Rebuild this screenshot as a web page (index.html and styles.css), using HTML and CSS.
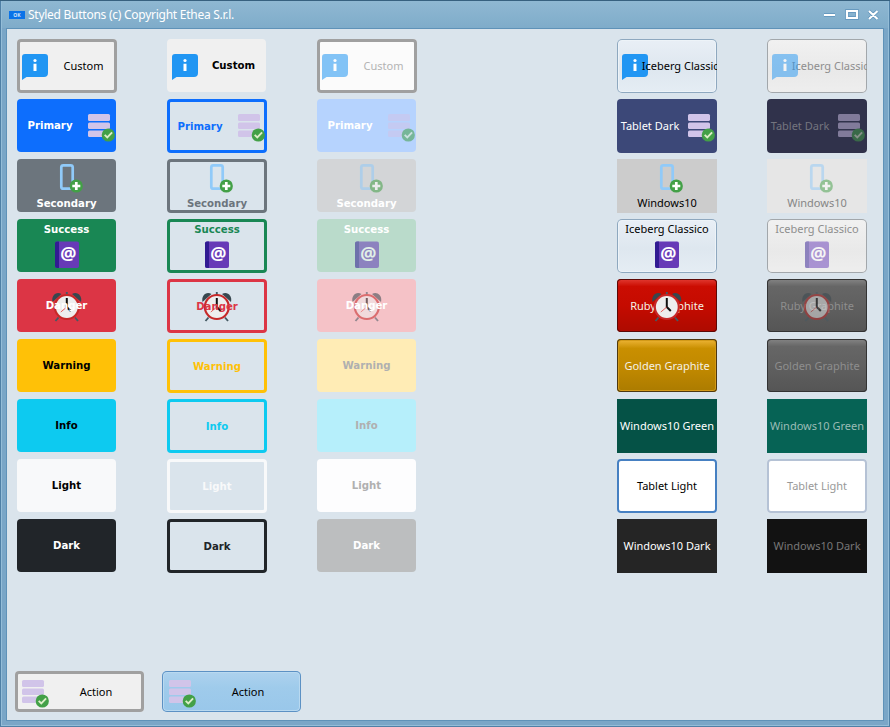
FILE: index.html
```
<!DOCTYPE html>
<html lang="en">
<head>
<meta charset="utf-8">
<title>Styled Buttons</title>
<link rel="stylesheet" href="styles.css">
</head>
<body>
<svg class="defs" aria-hidden="true">
  <symbol id="info" viewBox="0 0 32 32"><path fill="#2196f3" d="M6 4H26a3 3 0 0 1 3 3V23a4 4 0 0 1-4 4H7.500L3 30V7a3 3 0 0 1 3-3z"/><circle cx="16" cy="10.500" r="1.600" fill="#fff"/><path fill="#fff" d="M14.500 13.700h3V21h-3z"/></symbol>
  <symbol id="check" viewBox="0 0 32 32"><g fill="#d1c4e9"><rect x="3" y="4" width="22" height="7" rx="1.500"/><rect x="3" y="12.500" width="22" height="6.500" rx="1.500"/><rect x="3" y="20.500" width="22" height="6.500" rx="1.500"/></g><circle cx="23.300" cy="25" r="6.600" fill="#43a047"/><path d="M19.700 24.800l2.600 2.600 4.800-5" fill="none" stroke="#dcedc8" stroke-width="1.900"/></symbol>
  <symbol id="phone" viewBox="0 0 32 32"><rect x="10.300" y="4.300" width="11.400" height="23.400" rx="2" fill="none" stroke="#90caf9" stroke-width="2.700"/><circle cx="25.300" cy="25" r="6.600" fill="#43a047"/><path d="M25.300 21v8M21.300 25h8" stroke="#fff" stroke-width="2.700"/></symbol>
  <symbol id="book" viewBox="0 0 32 32"><rect x="4" y="2.500" width="24" height="26.500" rx="2" fill="#673ab7"/><path fill="#311b92" d="M6 2.500H8V29H6a2 2 0 0 1-2-2V4.500a2 2 0 0 1 2-2z"/><text class="at" x="17.300" y="21.300" text-anchor="middle">@</text></symbol>
  <symbol id="clock" viewBox="0 0 32 32"><g fill="#37474f"><path d="M1.500 12C0 6 5 1 10.500 4z"/><path d="M30 12C31.500 6 26.500 1 21 4z"/></g><path d="M15.800 2v3M7.500 27.500L4.500 31M24 27.500l3 3.500" stroke="#455a64" stroke-width="1.900"/><circle cx="15.800" cy="17" r="13" fill="#c62828"/><circle cx="15.800" cy="17" r="10.900" fill="#eee"/><path d="M15.800 8v9l4 4" fill="none" stroke="#111" stroke-width="2"/><path d="M15.800 17l-6 5" stroke="#e53935" stroke-width=".8"/></symbol>
</svg>
<div class="window">
  <header class="titlebar">
    <span class="app">OK</span>
    <span class="caption">Styled Buttons (c) Copyright Ethea S.r.l.</span>
    <svg class="controls" viewBox="0 0 56 14"><g fill="none" stroke="#5c91ba" stroke-width="3.600"><path d="M1 7h11M24 3h10v7H24zM46 3l8.500 8M54.500 3l-8.500 8"/></g><g fill="none" stroke="#fff" stroke-width="2.200"><path d="M1 7h11M24 3h10v7H24zM46 3l8.500 8M54.500 3l-8.500 8"/></g></svg>
  </header>
  <main class="client">
    <div class="board">
      <div class="column">
        <button class="btn left gray"><svg><use href="#info"/></svg><span>Custom</span></button>
        <button class="btn bold fill right primary"><svg><use href="#check"/></svg><span>Primary</span></button>
        <button class="btn bold fill top secondary"><svg><use href="#phone"/></svg><span>Secondary</span></button>
        <button class="btn bold fill bottom success"><svg><use href="#book"/></svg><span>Success</span></button>
        <button class="btn bold fill over danger"><svg><use href="#clock"/></svg><span>Danger</span></button>
        <button class="btn bold fill warning"><span>Warning</span></button>
        <button class="btn bold fill info"><span>Info</span></button>
        <button class="btn bold fill light"><span>Light</span></button>
        <button class="btn bold fill dark"><span>Dark</span></button>
      </div>
      <div class="column">
        <button class="btn bold fill left plain"><svg><use href="#info"/></svg><span>Custom</span></button>
        <button class="btn bold right line primary"><svg><use href="#check"/></svg><span>Primary</span></button>
        <button class="btn bold top line secondary"><svg><use href="#phone"/></svg><span>Secondary</span></button>
        <button class="btn bold bottom line success"><svg><use href="#book"/></svg><span>Success</span></button>
        <button class="btn bold over line danger"><svg><use href="#clock"/></svg><span>Danger</span></button>
        <button class="btn bold line warning"><span>Warning</span></button>
        <button class="btn bold line info"><span>Info</span></button>
        <button class="btn bold line light"><span>Light</span></button>
        <button class="btn bold line dark"><span>Dark</span></button>
      </div>
      <div class="column off">
        <button class="btn left gray"><svg><use href="#info"/></svg><span>Custom</span></button>
        <button class="btn bold fill right primary"><svg><use href="#check"/></svg><span>Primary</span></button>
        <button class="btn bold fill top secondary"><svg><use href="#phone"/></svg><span>Secondary</span></button>
        <button class="btn bold fill bottom success"><svg><use href="#book"/></svg><span>Success</span></button>
        <button class="btn bold fill over danger"><svg><use href="#clock"/></svg><span>Danger</span></button>
        <button class="btn bold fill warning"><span>Warning</span></button>
        <button class="btn bold fill info"><span>Info</span></button>
        <button class="btn bold fill light"><span>Light</span></button>
        <button class="btn bold fill dark"><span>Dark</span></button>
      </div>
      <div class="column styled">
        <button class="btn left iceberg"><svg><use href="#info"/></svg><span>Iceberg Classico</span></button>
        <button class="btn right tablet-dark"><svg><use href="#check"/></svg><span>Tablet Dark</span></button>
        <button class="btn top win10"><svg><use href="#phone"/></svg><span>Windows10</span></button>
        <button class="btn bottom iceberg"><svg><use href="#book"/></svg><span>Iceberg Classico</span></button>
        <button class="btn over graphite ruby"><svg><use href="#clock"/></svg><span>Ruby Graphite</span></button>
        <button class="btn graphite gold"><span>Golden Graphite</span></button>
        <button class="btn win-green"><span>Windows10 Green</span></button>
        <button class="btn tablet-light"><span>Tablet Light</span></button>
        <button class="btn win-dark"><span>Windows10 Dark</span></button>
      </div>
      <div class="column styled dim">
        <button class="btn left iceberg"><svg><use href="#info"/></svg><span>Iceberg Classico</span></button>
        <button class="btn right tablet-dark"><svg><use href="#check"/></svg><span>Tablet Dark</span></button>
        <button class="btn top win10"><svg><use href="#phone"/></svg><span>Windows10</span></button>
        <button class="btn bottom iceberg"><svg><use href="#book"/></svg><span>Iceberg Classico</span></button>
        <button class="btn over graphite ruby"><svg><use href="#clock"/></svg><span>Ruby Graphite</span></button>
        <button class="btn graphite gold"><span>Golden Graphite</span></button>
        <button class="btn win-green"><span>Windows10 Green</span></button>
        <button class="btn tablet-light"><span>Tablet Light</span></button>
        <button class="btn win-dark"><span>Windows10 Dark</span></button>
      </div>
    </div>
    <footer class="actions">
      <button class="btn left action gray"><svg><use href="#check"/></svg><span>Action</span></button>
      <button class="btn left action blue"><svg><use href="#check"/></svg><span>Action</span></button>
    </footer>
  </main>
</div>
</body>
</html>
```
FILE: styles.css
```
* { box-sizing: border-box; }
body { margin: 0; font: 11px/14px "Noto Sans", sans-serif; }
.defs { display: block; width: 0; height: 0; }
.window {
  width: 890px; height: 727px; display: flex; flex-direction: column;
  padding: 0 6px 6px; background: #7aa6c7;
  border-top: 1px solid #37617f;
  box-shadow: inset 1px 0 #4f80a6, inset -1px -1px #4f80a6, inset 2px 0 #94bdd8, inset -2px -2px #94bdd8;
}
.titlebar {
  height: 27px; margin: 0 -4px; padding: 0 9px 0 7px; display: flex; align-items: center;
  background: linear-gradient(#8fb8d2, #7facca); color: #fff; font-size: 12px; flex: none;
}
.app { width: 16px; height: 8px; background: #0a73e8; color: #cfe4fb; font-size: 5px; line-height: 8px; text-align: center; font-weight: bold; }
.caption { margin-left: 3px; white-space: nowrap; letter-spacing: -.26px; }
.controls { width: 56px; height: 14px; margin-left: auto; }
.client {
  flex: 1; background: #dae4ec; border: 1px solid #5f92b8; display: flex;
  flex-direction: column; justify-content: space-between; padding: 10px 0 8px;
}
.board { display: flex; gap: 50px; padding-left: 10px; }
.column { display: flex; flex-direction: column; gap: 6px; width: 100px; }
.column.off + .column { margin-left: 150px; }

.btn {
  --c: #000;
  width: 100px; height: 54px; padding: 0; border: 0; border-radius: 4px; overflow: hidden;
  display: grid; place-items: center; font: inherit; white-space: nowrap; color: #000; background: none;
}
.btn svg { width: 32px; height: 32px; }
.bold { font-family: "DejaVu Sans Condensed", "DejaVu Sans", sans-serif; font-size: 11.3px; font-weight: bold; font-stretch: condensed; }
.bold span { padding-top: 1px; }
.fill { width: 99px; height: 53px; margin-bottom: 1px; background: var(--c); color: #fff; }
.left { grid-template-columns: 32px 65px; justify-content: start; padding-left: 2px; }
.left span { width: 65px; display: flex; justify-content: center; }
.right { grid-template-columns: 66px 32px; column-gap: 2px; justify-content: start; }
.right svg { grid-column: 2; grid-row: 1; }
.right span { grid-column: 1; grid-row: 1; }
.top { grid-template-rows: 32px 20px; align-content: start; padding-top: 2px; }
.bottom { grid-template-rows: 20px 32px; align-content: start; }
.bottom svg { grid-row: 2; }
.bottom span { grid-row: 1; }
.over > * { grid-area: 1 / 1; }
.over span { z-index: 1; }
.at { font: bold 18px "Noto Sans", sans-serif; fill: #fff; }

.primary { --c: #0d6efd; }
.secondary { --c: #6c757d; }
.success { --c: #198754; }
.danger { --c: #dc3545; }
.warning { --c: #ffc107; }
.info { --c: #0dcaf0; }
.light { --c: #f8f9fa; }
.dark { --c: #212529; }
.plain { --c: #f0f0f0; }
.fill.warning, .fill.info, .fill.light, .fill.plain { color: #000; }
.line { color: var(--c); box-shadow: inset 0 0 0 3px var(--c); }
.gray { background: #f0f0f0; box-shadow: inset 0 0 0 3px #a0a0a0; }

.off .primary { --c: #b6d3fe; }
.off .secondary { --c: #d3d5d7; }
.off .success { --c: #badbcb; }
.off .danger { --c: #f5c2c7; }
.off .warning { --c: #ffecb5; }
.off .info { --c: #b6effb; }
.off .light { --c: #fdfdfe; }
.off .dark { --c: #bcbebf; }
.off .gray { background: #fbfbfb; color: #b4b4b4; }
.off svg { opacity: .55; }
.off .warning, .off .info, .off .light { color: #b0b0b0; }

.iceberg { background: linear-gradient(#e9eff6, #dee7ef 55%, #e5edf4); box-shadow: inset 0 0 0 1px #8ea8bf, inset 0 0 0 2px #edf3f8; border-radius: 5px; }
.tablet-dark { background: #3c4878; color: #fff; }
.win10 { background: #ccc; border-radius: 0; }
.graphite { height: 53px; margin-bottom: 1px; color: #f4f1e6; }
.ruby { background: linear-gradient(#e23b32, #cb0d02 14%, #c50b00 50%, #ad0b00); box-shadow: inset 0 0 0 1px #5c0805; }
.gold { background: linear-gradient(#f0b73a, #c98f00 18%, #c18900 55%, #ab7b00); box-shadow: inset 0 0 0 1px #4d3810, inset 0 0 0 2px #d39a18; }
.ruby svg { z-index: 2; }
.win-green { background: #055246; color: #fff; border-radius: 0; }
.tablet-light { background: #fff; box-shadow: inset 0 0 0 2px #4680c2; }
.win-dark { background: #252525; color: #fff; border-radius: 0; }

.dim svg { opacity: .5; }
.dim .iceberg { background: linear-gradient(#f1f1f1, #e9e9e9 60%, #eee); box-shadow: inset 0 0 0 1px #a2a7ab; color: #8e8e8e; }
.dim .tablet-dark { background: #30324b; color: #74757f; }
.dim .win10 { background: #e6e6e6; color: #858585; }
.dim .graphite { background: linear-gradient(#858585, #666 14%, #606060 50%, #555); box-shadow: inset 0 0 0 1px #333; color: #8e8e8e; }
.dim .win-green { background: #066355; color: #9bbcb6; }
.dim .tablet-light { box-shadow: inset 0 0 0 2px #b5c2d5; color: #999; }
.dim .win-dark { background: #121212; color: #777; }

.actions { display: flex; gap: 18px; padding-left: 8px; }
.action { height: 41px; width: 129px; grid-template-columns: 32px 90px; padding-left: 4px; }
.action span { width: 90px; }
.blue { width: 139px; grid-template-columns: 32px 100px; background: linear-gradient(#aed2ee, #9fcbeb 40%, #99c7ea); box-shadow: inset 0 0 0 1px #5c91c4, inset 0 0 0 2px #b9d9f0; border-radius: 5px; }
.blue span { width: 100px; }
```
